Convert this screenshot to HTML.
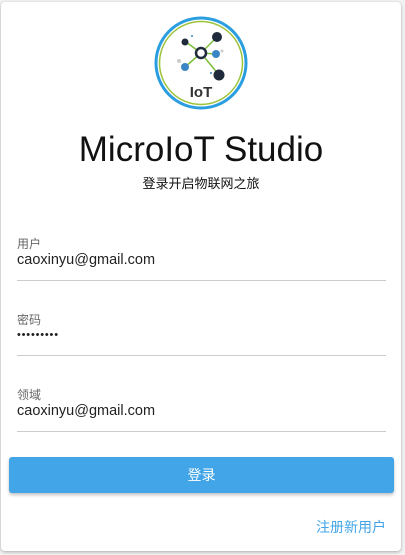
<!DOCTYPE html>
<html><head><meta charset="utf-8"><style>
html,body{margin:0;padding:0;width:405px;height:555px;background:#f2f2f2;overflow:hidden;font-family:"Liberation Sans","Noto Sans CJK SC",sans-serif}
.card{position:absolute;left:1px;top:2px;width:400px;height:549px;background:#fff;border-radius:4px;box-shadow:0 1px 3px rgba(0,0,0,.3)}
.t{position:absolute;left:0;width:402px;text-align:center;color:#111}
.lab{position:absolute;left:17px;font-size:12px;color:#666}
.val{position:absolute;left:17px;font-size:14.5px;color:#222}
.ln{position:absolute;left:17px;width:369px;height:1px;background:#ccc}
.btn{position:absolute;left:9px;top:457px;width:385px;height:36px;background:#42a5e8;border-radius:3px;box-shadow:0 2px 3px rgba(0,0,0,.25);color:#fff;text-align:center;line-height:36px;font-size:14px}
</style></head><body>
<div class="card"></div>
<svg style="position:absolute;left:0;top:0" width="405" height="120">
<circle cx="201" cy="63" r="45" fill="#fff" stroke="#2a9ee0" stroke-width="3"/>
<circle cx="201" cy="63" r="41.5" fill="none" stroke="#9cc43a" stroke-width="1.5"/>
<g stroke="#7cbf3a" stroke-width="1.5">
<line x1="186" y1="42" x2="201" y2="53"/><line x1="201" y1="53" x2="217" y2="37"/><line x1="201" y1="53" x2="216" y2="54"/><line x1="201" y1="53" x2="185" y2="67"/><line x1="201" y1="53" x2="219" y2="75"/>
</g>
<circle cx="201" cy="53" r="5" fill="#fff" stroke="#1f2a3c" stroke-width="2.5"/>
<circle cx="185" cy="42" r="3.5" fill="#1f2a3c"/>
<circle cx="217" cy="37" r="5" fill="#1f2a3c"/>
<circle cx="216" cy="54" r="4" fill="#3a86c4"/>
<circle cx="185" cy="67" r="4" fill="#3a86c4"/>
<circle cx="219" cy="75" r="5.5" fill="#1f2a3c"/>
<circle cx="179" cy="61" r="2" fill="#ccc"/><circle cx="222" cy="51" r="1.5" fill="#ccc"/>
<circle cx="192" cy="36" r="1" fill="#3a86c4"/><circle cx="211" cy="73" r="1" fill="#3a86c4"/>
<text x="201" y="97" text-anchor="middle" font-family="Liberation Sans" font-weight="bold" font-size="15" fill="#333">IoT</text>
</svg>
<div class="t" style="top:129px;font-size:35px;line-height:42px">MicroIoT Studio</div>
<div class="t" style="top:173px;font-size:13px">登录开启物联网之旅</div>
<div class="lab" style="top:235px">用户</div>
<div class="val" style="top:252px">caoxinyu@gmail.com</div>
<div class="ln" style="top:280px"></div>
<div class="lab" style="top:311px">密码</div>
<div class="val" style="top:329px;font-size:11px;letter-spacing:0.8px">•••••••••</div>
<div class="ln" style="top:355px"></div>
<div class="lab" style="top:386px">领域</div>
<div class="val" style="top:403px">caoxinyu@gmail.com</div>
<div class="ln" style="top:431px"></div>
<div class="btn">登录</div>
<div style="position:absolute;left:316px;top:517px;font-size:14px;color:#42a5e8">注册新用户</div>
</body></html>
